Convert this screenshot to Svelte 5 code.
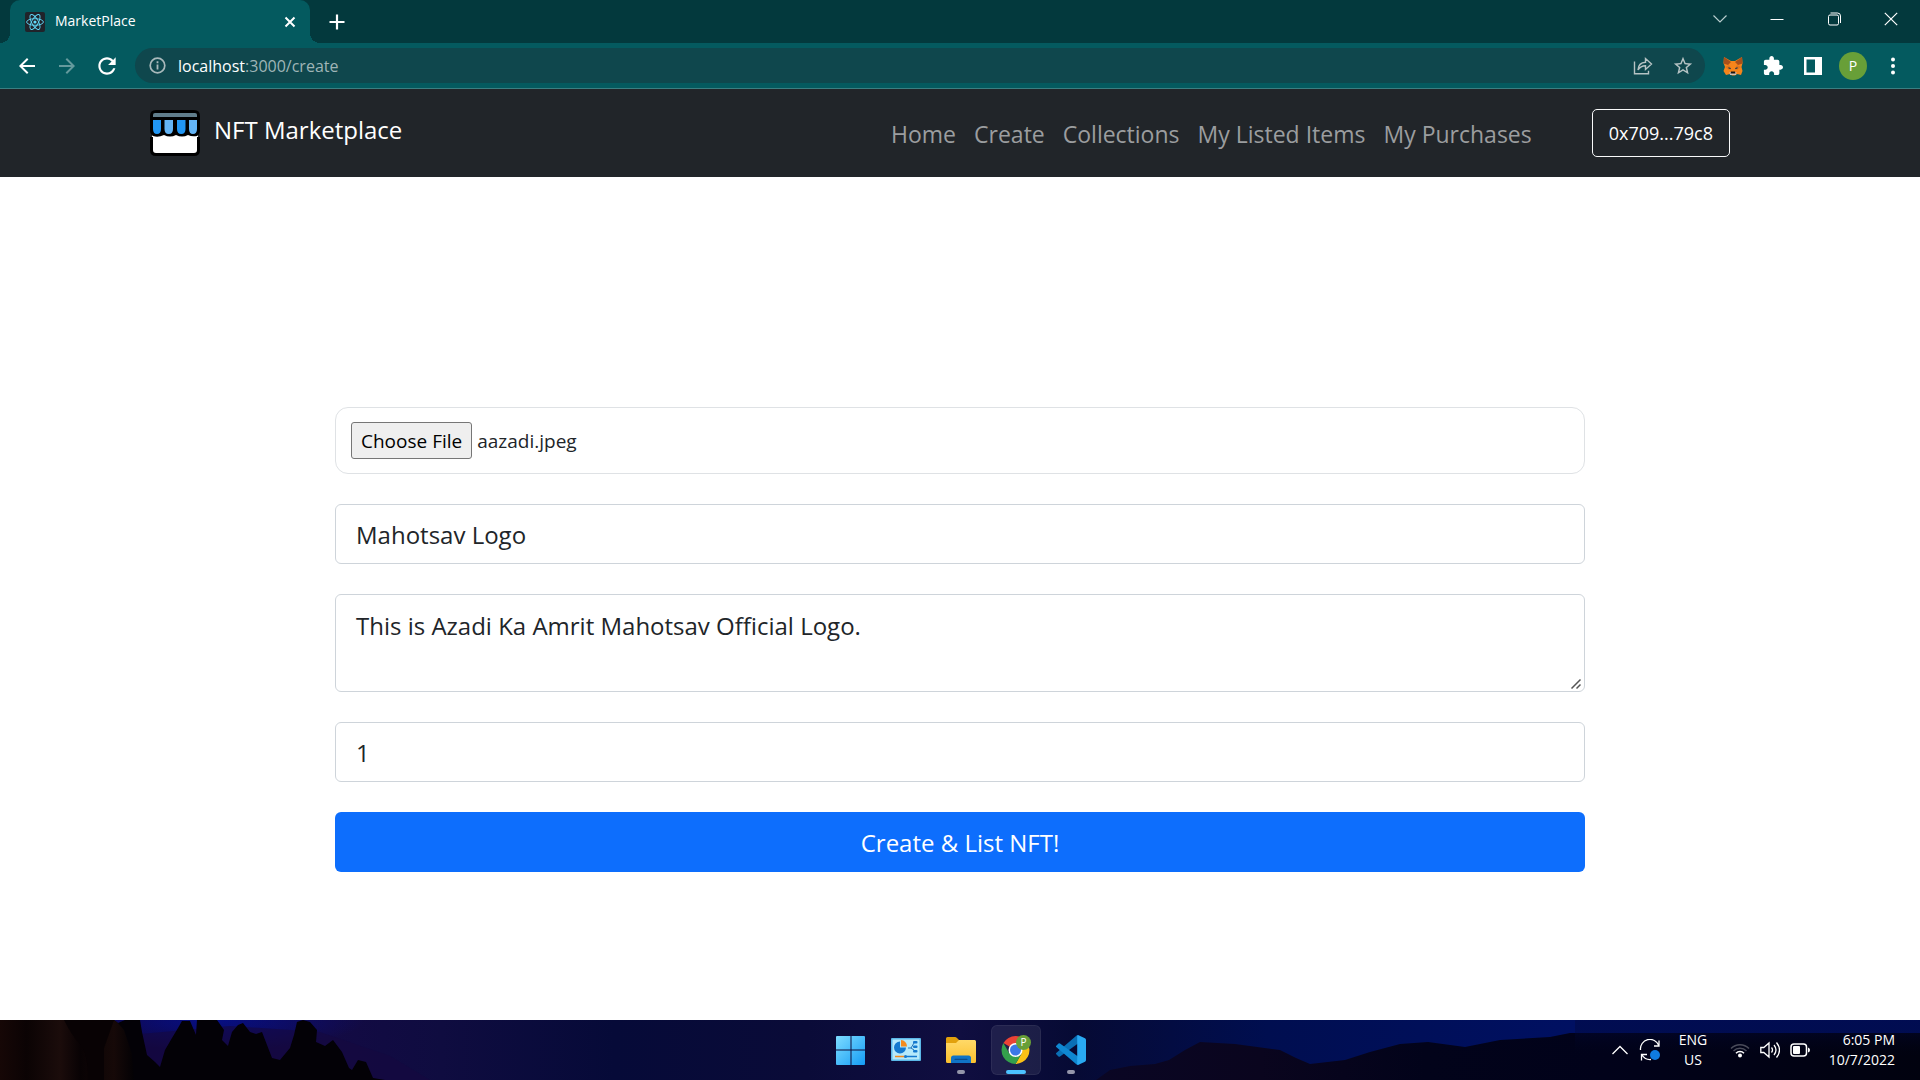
<script>
  import { onMount } from 'svelte';

  let fileInput;
  let name = $state('Mahotsav Logo');
  let description = $state('This is Azadi Ka Amrit Mahotsav Official Logo.');
  let price = $state(1);

  const links = ['Home', 'Create', 'Collections', 'My Listed Items', 'My Purchases'];

  onMount(() => {
    const transfer = new DataTransfer();
    transfer.items.add(new File([''], 'aazadi.jpeg', { type: 'image/jpeg' }));
    fileInput.files = transfer.files;
  });
</script>

<div class="screen">
  <div class="tabstrip">
    <div class="tab">
      <svg class="favicon" width="20" height="20" viewBox="0 0 20 20" aria-hidden="true">
        <rect width="20" height="20" rx="2" fill="#20232a" />
        <g fill="none" stroke="#61dafb" stroke-width="0.9">
          <ellipse cx="10" cy="10" rx="8.4" ry="3.3" />
          <ellipse cx="10" cy="10" rx="8.4" ry="3.3" transform="rotate(60 10 10)" />
          <ellipse cx="10" cy="10" rx="8.4" ry="3.3" transform="rotate(120 10 10)" />
        </g>
        <circle cx="10" cy="10" r="1.6" fill="#61dafb" />
      </svg>
      <span class="title">MarketPlace</span>
      <button class="tab-close" aria-label="Close tab">
        <svg width="12" height="12" viewBox="0 0 12 12"><path d="M1.5 1.5l9 9M10.500 1.500l-9 9" stroke="#fff" stroke-width="2" /></svg>
      </button>
    </div>
    <button class="new-tab" aria-label="New tab">
      <svg width="16" height="16" viewBox="0 0 16 16"><path d="M8 .5v15M.5 8h15" stroke="#fff" stroke-width="2.2" /></svg>
    </button>
    <div class="window-controls">
      <button aria-label="Search tabs">
        <svg width="14" height="14" viewBox="0 0 14 14"><path d="M.5 3.500l6.500 6.500 6.500-6.500" fill="none" stroke="#b9cdce" stroke-width="1.2" /></svg>
      </button>
      <button aria-label="Minimize">
        <svg width="14" height="14" viewBox="0 0 14 14"><path d="M.5 7.500h13" stroke="#fff" /></svg>
      </button>
      <button aria-label="Restore">
        <svg width="14" height="14" viewBox="0 0 14 14" fill="none" stroke="#fff"><rect x="1.500" y="3" width="10" height="10" rx="1.500" /><path d="M3.500 1h7q3 0 3 3v7" /></svg>
      </button>
      <button aria-label="Close">
        <svg width="14" height="14" viewBox="0 0 14 14"><path d="M.8.8l12.400 12.400M13.200.8L.8 13.200" stroke="#fff" stroke-width="1.200" /></svg>
      </button>
    </div>
  </div>

  <div class="toolbar">
    <button class="tool" aria-label="Back">
      <svg width="24" height="24" viewBox="0 0 24 24" fill="#fff"><path d="M20 11H7.830l5.590-5.590L12 4l-8 8 8 8 1.410-1.410L7.830 13H20v-2z" /></svg>
    </button>
    <button class="tool" aria-label="Forward">
      <svg width="24" height="24" viewBox="0 0 24 24" fill="#659a9d"><path d="M4 11h12.170l-5.590-5.590L12 4l8 8-8 8-1.410-1.410L16.170 13H4v-2z" /></svg>
    </button>
    <button class="tool" aria-label="Reload">
      <svg width="26" height="26" viewBox="0 0 24 24" fill="#fff"><path d="M17.650 6.350C16.200 4.900 14.210 4 12 4c-4.420 0-7.990 3.580-7.990 8s3.570 8 7.990 8c3.730 0 6.840-2.550 7.730-6h-2.080c-.82 2.330-3.040 4-5.650 4-3.310 0-6-2.690-6-6s2.690-6 6-6c1.660 0 3.140.69 4.220 1.780L13 11h7V4l-2.350 2.350z" /></svg>
    </button>
    <div class="omnibox">
      <button class="info" aria-label="Site information">
        <svg width="17" height="17" viewBox="0 0 17 17"><circle cx="8.500" cy="8.500" r="7.300" fill="none" stroke="#a9b9bb" stroke-width="1.700" /><path d="M8.500 7.500v5M8.500 4.300v1.900" stroke="#a9b9bb" stroke-width="1.800" /></svg>
      </button>
      <div class="url"><span>localhost</span>:3000/create</div>
      <button class="tool" aria-label="Share">
        <svg width="20" height="20" viewBox="0 0 20 20" fill="none" stroke="#b6c3c4" stroke-width="1.400"><path d="M1.500 5.500v12.300h14v-3" /><path d="M5 14c.3-5 3-7.500 7.500-7.700V2.500l6 5.500-6 5.500V9.800C9 9.800 6.800 11 5 14z" /></svg>
      </button>
      <button class="tool" aria-label="Bookmark this page">
        <svg width="22" height="22" viewBox="0 0 24 24" fill="#b6c3c4"><path d="M22 9.240l-7.190-.62L12 2 9.190 8.630 2 9.240l5.460 4.730L5.820 21 12 17.270 18.180 21l-1.630-7.030L22 9.240zM12 15.400l-3.760 2.270 1-4.280-3.320-2.880 4.380-.38L12 6.100l1.710 4.040 4.380.38-3.320 2.880 1 4.280L12 15.400z" /></svg>
      </button>
    </div>
    <div class="extensions">
      <button class="tool" aria-label="MetaMask">
        <svg width="20" height="20" viewBox="0 0 20 20">
          <path d="M1 1l7 4h4l7-4 .5 6-1 4 1 4-1.500 4-4-1-2 1.500H9L7 18l-4 1-2.500-4 1.500-4-1.500-4z" fill="#f6851b" />
          <path d="M1 1l7 5-3 3-4.500-1.500zM19 1l-7 5 3 3 4.500-1.500z" fill="#a9501a" />
          <path d="M2 11l4-2 2 3-2 2zM18 11l-4-2-2 3 2 2z" fill="#e2761b" />
          <path d="M5.500 11l2.500 1.300-.5.900-2-.7zM14.500 11L12 12.300l.5.900 2-.7z" fill="#2b3c4a" />
          <path d="M6.500 16h7l-.5 3h-6z" fill="#d7c1b3" />
          <path d="M8 15.500h4l.5 2h-5z" fill="#161616" />
        </svg>
      </button>
      <button class="tool" aria-label="Extensions">
        <svg width="20" height="20" viewBox="1 1 22 22" fill="#fff"><path d="M20.500 11H19V7c0-1.100-.9-2-2-2h-4V3.500C13 2.120 11.880 1 10.500 1S8 2.120 8 3.500V5H4c-1.100 0-1.990.9-1.990 2v3.800H3.500c1.490 0 2.700 1.210 2.700 2.700s-1.210 2.700-2.700 2.700H2V20c0 1.100.9 2 2 2h3.800v-1.500c0-1.490 1.210-2.700 2.700-2.700 1.490 0 2.700 1.210 2.700 2.700V22H17c1.100 0 2-.9 2-2v-4h1.500c1.380 0 2.500-1.120 2.500-2.500S21.880 11 20.500 11z" /></svg>
      </button>
      <button class="tool" aria-label="Side panel">
        <svg width="18" height="18" viewBox="0 0 18 18"><path d="M0 0h18v18H0zM2.500 2.500v13H11v-13z" fill="#fff" fill-rule="evenodd" /></svg>
      </button>
      <button class="tool" aria-label="Profile"><span class="avatar">P</span></button>
      <button class="tool" aria-label="Menu">
        <svg width="6" height="18" viewBox="0 0 6 18" fill="#fff"><circle cx="3" cy="2.500" r="2" /><circle cx="3" cy="9" r="2" /><circle cx="3" cy="15.500" r="2" /></svg>
      </button>
    </div>
  </div>

  <header class="navbar">
    <div class="container">
      <a class="brand" href="#home">
        <svg width="50" height="46" viewBox="0 0 50 46" aria-hidden="true">
          <path d="M2 24h46v16q0 4-4 4H6q-4 0-4-4z" fill="#fff" />
          <path d="M1.500 27v13q0 4.500 4.500 4.500h38q4.500 0 4.500-4.500V27" fill="none" stroke="#000" stroke-width="3" />
          <path d="M6 0h38q6 0 6 6v14q0 4-3 6-5 1-9-1-6 3-12 0-6 3-12 0-6 3-11 1-3-2-3-6V6q0-6 6-6z" fill="#000" />
          <path d="M5 3h40q2 0 2 2v2H3V5q0-2 2-2z" fill="#607d8b" />
          <path d="M3 10h8v9q0 5-4 5t-4-5zM27 10h8.500v9q0 5-4.250 5T27 19z" fill="#2196f3" />
          <path d="M14.500 10H23v9q0 5-4.250 5t-4.250-5zM39 10h8v9q0 5-4 5t-4-5z" fill="#64b5f6" />
        </svg>
        <span>NFT Marketplace</span>
      </a>
      <nav>
        {#each links as link}
          <a href={'#' + link.toLowerCase().replaceAll(' ', '-')}>{link}</a>
        {/each}
      </nav>
      <button class="account">0x709...79c8</button>
    </div>
  </header>

  <main>
    <form onsubmit={(e) => e.preventDefault()}>
      <div class="file-card">
        <input bind:this={fileInput} type="file" aria-label="NFT image" />
      </div>
      <input class="field" type="text" aria-label="Name" bind:value={name} />
      <textarea class="field area" aria-label="Description" bind:value={description}></textarea>
      <input class="field" type="number" aria-label="Price in ETH" bind:value={price} />
      <button class="submit">Create &amp; List NFT!</button>
    </form>
  </main>

  <footer class="taskbar">
    <svg class="wallpaper" viewBox="0 0 1920 60" preserveAspectRatio="none" aria-hidden="true">
      <defs>
        <linearGradient id="sky">
          <stop offset="0" stop-color="#12073c" />
          <stop offset="0.1" stop-color="#100745" />
          <stop offset="0.17" stop-color="#130a44" />
          <stop offset="0.23" stop-color="#0f0c40" />
          <stop offset="0.32" stop-color="#060a38" />
          <stop offset="0.42" stop-color="#0a0b38" />
          <stop offset="0.5" stop-color="#100e40" />
          <stop offset="0.56" stop-color="#060a34" />
          <stop offset="0.66" stop-color="#000e50" />
          <stop offset="0.82" stop-color="#001062" />
        </linearGradient>
        <radialGradient id="glow">
          <stop offset="0" stop-color="#0212a0" stop-opacity="0.7" />
          <stop offset="1" stop-color="#0212a0" stop-opacity="0" />
        </radialGradient>
        <linearGradient id="ridge">
          <stop offset="0" stop-color="#0a0624" />
          <stop offset="0.2" stop-color="#0a051e" />
          <stop offset="0.4" stop-color="#02031a" />
          <stop offset="0.62" stop-color="#01021a" />
          <stop offset="1" stop-color="#01020f" />
        </linearGradient>
        <linearGradient id="cliff">
          <stop offset="0" stop-color="#160706" />
          <stop offset="0.2" stop-color="#0b0304" />
          <stop offset="0.45" stop-color="#1b0c0b" />
          <stop offset="0.6" stop-color="#080204" />
          <stop offset="0.85" stop-color="#160908" />
          <stop offset="1" stop-color="#030104" />
        </linearGradient>
        <linearGradient id="upper-right" x1="0" y1="0" x2="0" y2="1">
          <stop offset="0" stop-color="#020a48" stop-opacity="0.6" />
          <stop offset="0.6" stop-color="#01031a" stop-opacity="0" />
        </linearGradient>
      </defs>
      <rect width="1920" height="60" fill="url(#sky)" />
      <ellipse cx="215" cy="0" rx="150" ry="30" fill="url(#glow)" />
      <path d="M140 14l90-8 90 6 70 24 40 24H140z" fill="#160840" opacity=".6" />
      <path d="M0 0H114L118 3 125 0H140L142 12 147 35 155 42 160 47 165 30 172 18 178 8 182 1H190L196 15 197 0H217L224 10 222 20 228 26 232 12 238 5 243 3 250 12 256 14 262 12 267 25 272 38 280 40 290 28 294 15 297 2 303 0 310 2 317 10 316 22 325 26 333 20 342 32 349 48 352 50 358 40 366 42 373 58 385 60H0z" fill="#030106" />
      <path d="M0 0h114l4 3 6 7 8 24 2 26H0z" fill="url(#cliff)" />
      <path d="M64 0q8 16 16 24t8 36h16V28l10-28z" fill="#080204" />
      <path d="M1096 60l14-10 20-4 25-2 14-4 16-10 15-8 35 2 45 6 16 8 14 6 35-4 25-8 30-8 28-2 37 5 35-7 50-3 20-4h350v60z" fill="url(#ridge)" />
      <rect x="1575" width="345" height="60" fill="url(#upper-right)" />
    </svg>

    <div class="apps">
      <button class="app" aria-label="Start">
        <svg width="30" height="30" viewBox="0 0 30 30">
          <defs><linearGradient id="win" x1="0" y1="0" x2="1" y2="1"><stop offset="0" stop-color="#7edcff" /><stop offset="1" stop-color="#149cf5" /></linearGradient></defs>
          <path d="M1 1h13.500v13.500H0V2q0-1 1-1zM15.500 1H28q1 0 1 1v12.500H15.500zM0 15.500h14.500V30H1q-1 0-1-1zM15.500 15.500H29V29q0 1-1 1H15.500z" fill="url(#win)" />
        </svg>
      </button>
      <button class="app" aria-label="Control Panel">
        <svg width="30" height="30" viewBox="0 0 30 30">
          <rect y="3" width="30" height="23" rx="1" fill="#5bb8e8" /><rect x="1.500" y="4.500" width="27" height="20" fill="#b5e9fb" />
          <path d="M9 6.500a6 6 0 1 0 6 6H9z" fill="#1479cf" /><path d="M10 5v6.500h6A6.500 6.500 0 0 0 10 5z" fill="#f48b1d" />
          <path d="M17 13h3l3-5M20 13l3 2" fill="none" stroke="#2374b8" />
          <rect x="22" y="6" width="4.500" height="2.500" rx="1" fill="#1479cf" /><rect x="22" y="10.500" width="4.500" height="2.500" rx="1" fill="#1479cf" /><rect x="22" y="15" width="4.500" height="2.500" rx="1" fill="#1479cf" />
          <path d="M4 21.500h10" stroke="#f48b1d" stroke-width="1.500" /><path d="M15 21.500h11" stroke="#1479cf" stroke-width="1.500" /><circle cx="14.500" cy="21.500" r="1.500" fill="#1479cf" />
        </svg>
      </button>
      <button class="app open" aria-label="File Explorer">
        <svg width="30" height="30" viewBox="0 0 30 30">
          <defs><linearGradient id="folder" x1="0" y1="0" x2="0" y2="1"><stop offset="0" stop-color="#ffd968" /><stop offset="1" stop-color="#fbc02d" /></linearGradient></defs>
          <path d="M1.500 2H9q1 0 2 1l2 2h16v6H0V3.500Q0 2 1.500 2z" fill="#e2a10c" />
          <path d="M0 8h10l3-3h15.500Q30 5 30 6.500v20q0 1.500-1.500 1.500h-27Q0 28 0 26.500z" fill="url(#folder)" />
          <path d="M5 28v-5q0-2.500 2.500-2.500h15Q25 20.500 25 23v5z" fill="#1073c6" /><path d="M9 24.300h12" stroke="#0b4c8c" stroke-width="1.200" stroke-linecap="round" />
        </svg>
      </button>
      <button class="app open active" aria-label="Google Chrome">
        <svg width="30" height="30" viewBox="0 0 30 30">
          <path d="M14.500 15L2.380 8A14 14 0 0 1 26.620 8H14.500z" fill="#ea4335" />
          <path d="M14.500 8h12.120A14 14 0 0 1 14.500 29l6.060-10.500z" fill="#fbc116" />
          <path d="M2.380 8A14 14 0 0 0 14.500 29l6.060-10.500-6.060 3.500-6.060-3.500z" fill="#34a04c" />
          <circle cx="14.500" cy="15" r="7" fill="#fff" /><circle cx="14.500" cy="15" r="5.500" fill="#3b78e7" />
        </svg>
        <span class="badge">P</span>
      </button>
      <button class="app open" aria-label="Visual Studio Code">
        <svg width="30" height="30" viewBox="0 0 30 30">
          <path d="M0 19l2.500 2.500q.8.500 1.500 0L22 8.500V0q-1 0-2 1L.2 18q-.5.500-.2 1z" fill="#0a6fb5" />
          <path d="M0 11l2.500-2.500q.8-.5 1.500 0L22 21.500V30q-1 0-2-1L.2 12q-.5-.5-.2-1z" fill="#0f87d1" />
          <path d="M22 0l7 3.200q1 .5 1 1.800v20q0 1.300-1 1.800L22 30q-.800-.3-.800-1.500V1.500Q21.200.3 22 0z" fill="#29a9f2" />
        </svg>
      </button>
    </div>

    <div class="tray">
      <button aria-label="Show hidden icons" class="slot">
        <svg width="18" height="18" viewBox="0 0 18 18"><path d="M1.500 13L9 5.500l7.500 7.500" fill="none" stroke="#fff" stroke-width="1.300" /></svg>
      </button>
      <button aria-label="Updates" class="slot">
        <svg width="22" height="22" viewBox="0 0 22 22" fill="none" stroke="#fff" stroke-width="1.300"><path d="M1.500 11A9.500 9.500 0 0 1 19.800 6.500M20 1.500v5.500h-5M12 20.500A9.500 9.500 0 0 1 3 16M2.500 21.500v-6h5.500" /><circle cx="16" cy="16" r="5" fill="#0f7be0" stroke="none" /></svg>
      </button>
      <button class="lang">ENG<br />US</button>
      <button class="status" aria-label="Network, volume and battery">
        <svg width="20" height="20" viewBox="0 0 20 20" fill="none" stroke-width="1.500"><path d="M1 8.500a12.700 12.700 0 0 1 18 0M3.500 11a9.200 9.200 0 0 1 13 0" stroke="#4a4b5a" /><path d="M6 13.200a5.600 5.600 0 0 1 8 0" stroke="#fff" /><circle cx="10" cy="15.500" r="2" fill="#fff" /></svg>
        <svg width="20" height="20" viewBox="0 0 20 20" fill="none" stroke="#fff" stroke-width="1.300"><path d="M.8 7.500h3L9 3v14l-5.200-4.500h-3zM11.500 7.500q2 2.500 0 5M14 5q4 5 0 10M16.500 2.500q6 7.500 0 15" /></svg>
        <svg width="20" height="20" viewBox="0 0 20 20"><rect x="1" y="4" width="15.500" height="12" rx="3" fill="none" stroke="#fff" stroke-width="1.500" /><rect x="3" y="6" width="7" height="8" rx="1" fill="#fff" /><path d="M18 7.500q2 .5 2 2.500t-2 2.500z" fill="#fff" /></svg>
      </button>
      <button class="clock">6:05 PM<br />10/7/2022</button>
    </div>
  </footer>
</div>

<style>
  :global(body) {
    margin: 0;
    background: #fff;
  }

  .screen {
    display: flex;
    flex-direction: column;
    min-height: 100vh;
    font-family: 'Segoe UI', 'Open Sans', 'Noto Sans', sans-serif;
    color: #212529;
  }

  .screen :is(div, a, input, textarea, button, form) {
    box-sizing: border-box;
  }

  button {
    border: 0;
    padding: 0;
    background: none;
    color: #fff;
    font: inherit;
    cursor: pointer;
  }

  svg {
    display: block;
    flex: none;
  }

  /* Browser frame */
  .tabstrip {
    display: flex;
    height: 43px;
    padding: 0 1px 0 10px;
    background: #03393d;
  }

  .tab {
    position: relative;
    display: flex;
    align-items: center;
    gap: 10px;
    width: 300px;
    padding: 0 13px 0 15px;
    border-radius: 10px 10px 0 0;
    background: #045a5f;
    color: #fff;
    font-size: 14px;
  }

  .tab::before,
  .tab::after {
    content: '';
    position: absolute;
    bottom: 0;
    width: 10px;
    height: 10px;
  }

  .tab::before {
    right: 100%;
    background: radial-gradient(circle at 0 0, transparent 10px, #045a5f 10px);
  }

  .tab::after {
    left: 100%;
    background: radial-gradient(circle at 100% 0, transparent 10px, #045a5f 10px);
  }

  .title {
    flex: 1;
    padding-bottom: 2px;
  }

  .tab-close,
  .new-tab,
  .window-controls button,
  .tool,
  .slot {
    display: grid;
    place-items: center;
  }

  .tab-close {
    width: 14px;
    height: 20px;
  }

  .new-tab {
    width: 36px;
    margin-left: 9px;
  }

  .window-controls {
    display: flex;
    height: 37px;
    margin-left: auto;
  }

  .window-controls button {
    width: 57px;
  }

  .toolbar {
    display: flex;
    align-items: center;
    height: 46px;
    padding: 0 7px;
    border-bottom: 1px solid #3a7f82;
    background: #045a5f;
  }

  .tool {
    width: 40px;
    height: 35px;
  }

  .omnibox {
    display: flex;
    flex: 1;
    align-items: center;
    height: 35px;
    margin: 0 8px;
    padding: 0 2px 0 14px;
    border-radius: 18px;
    background: #0f474d;
    font-size: 16px;
  }

  .url {
    flex: 1;
    margin-left: 12px;
    color: #9fb5b7;
  }

  .url span {
    color: #fff;
  }

  .extensions {
    display: flex;
  }

  .avatar {
    display: grid;
    place-items: center;
    width: 28px;
    height: 28px;
    border-radius: 50%;
    background: #689f38;
    font-size: 14px;
  }

  /* Site header */
  .navbar {
    background: #212529;
  }

  .container {
    display: flex;
    align-items: center;
    max-width: 1650px;
    height: 88px;
    margin: 0 auto;
    padding: 0 55px 0 15px;
  }

  .brand {
    display: flex;
    align-items: center;
    gap: 14px;
    color: #fff;
    font-size: 24px;
    text-decoration: none;
  }

  .brand span {
    padding-bottom: 8px;
  }

  nav {
    display: flex;
    gap: 18px;
    margin-left: auto;
    padding-top: 2px;
  }

  nav a {
    color: #9b9d9f;
    font-size: 23px;
    text-decoration: none;
  }

  .account {
    height: 48px;
    margin-left: 60px;
    padding: 0 16px;
    border: 1px solid #f8f9fa;
    border-radius: 5px;
    font-size: 18px;
  }

  /* Form */
  main {
    flex: 1;
    padding: 230px 20px 60px;
  }

  form {
    display: flex;
    flex-direction: column;
    gap: 30px;
    max-width: 1250px;
    margin: 0 auto;
  }

  .file-card {
    height: 67px;
    padding: 14px 15px;
    border: 1px solid #dfe2e5;
    border-radius: 13px;
  }

  .file-card input {
    display: block;
    width: 100%;
    color: #212529;
    font: inherit;
    font-size: 19px;
  }

  .file-card input::file-selector-button {
    box-sizing: border-box;
    height: 37px;
    margin: 0 5px 0 0;
    padding: 0 9px;
    border: 1px solid #767676;
    border-radius: 3px;
    background: #efefef;
    color: #000;
    font: inherit;
  }

  .field {
    width: 100%;
    height: 60px;
    margin: 0;
    padding: 10px 20px;
    border: 1px solid #ced4da;
    border-radius: 6px;
    background: #fff;
    color: #212529;
    font: inherit;
    font-size: 24px;
    line-height: 38px;
  }

  .area {
    display: block;
    height: 98px;
    padding: 12px 20px;
    resize: vertical;
  }

  .area::-webkit-resizer {
    background: url("data:image/svg+xml,%3Csvg xmlns='http://www.w3.org/2000/svg' width='15' height='15'%3E%3Cpath d='M2.500 12.500l9-9M7.500 12.500l4-4' stroke='%23555' stroke-width='1.500'/%3E%3C/svg%3E") no-repeat right bottom;
  }

  .submit {
    height: 60px;
    border-radius: 6px;
    background: #0d6efd;
    font-size: 24px;
  }

  /* Desktop taskbar */
  .taskbar {
    position: relative;
    display: grid;
    grid-template-columns: 1fr auto 1fr;
    height: 60px;
    overflow: hidden;
    background: #060a38;
  }

  .wallpaper {
    position: absolute;
    width: 100%;
    height: 100%;
  }

  .apps {
    position: relative;
    display: flex;
    grid-column: 2;
    align-items: center;
    gap: 5px;
    padding-left: 2px;
  }

  .app {
    position: relative;
    display: grid;
    place-items: center;
    width: 50px;
    height: 50px;
    border-radius: 6px;
  }

  .active {
    background: rgb(255 255 255 / 8%);
    box-shadow: inset 0 0 0 1px rgb(255 255 255 / 6%);
  }

  .open::after {
    content: '';
    position: absolute;
    bottom: 1px;
    left: calc(50% - 4px);
    width: 8px;
    height: 4px;
    border-radius: 2px;
    background: #9496aa;
  }

  .active::after {
    left: calc(50% - 10px);
    width: 20px;
    background: #4cc2ff;
  }

  .badge {
    position: absolute;
    top: 10px;
    right: 10px;
    display: grid;
    place-items: center;
    width: 15px;
    height: 15px;
    border-radius: 50%;
    background: #689f38;
    font-size: 10px;
    line-height: 15px;
  }

  .tray {
    position: relative;
    display: flex;
    grid-column: 3;
    align-items: center;
    justify-content: flex-end;
    padding-right: 25px;
    font-size: 14px;
    line-height: 20px;
  }

  .slot {
    width: 30px;
    height: 50px;
  }

  .lang {
    width: 56px;
  }

  .status {
    display: flex;
    gap: 10px;
    padding: 0 9px;
  }

  .clock {
    width: 76px;
    text-align: right;
  }
</style>
